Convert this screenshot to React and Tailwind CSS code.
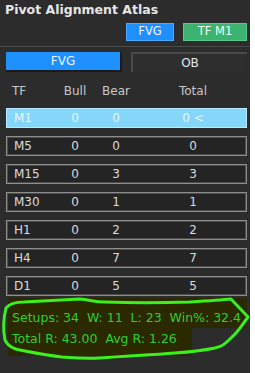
import React from "react";

const rows = [
  { tf: "M1", bull: "0", bear: "0", total: "0 <", active: true },
  { tf: "M5", bull: "0", bear: "0", total: "0" },
  { tf: "M15", bull: "0", bear: "3", total: "3" },
  { tf: "M30", bull: "0", bear: "1", total: "1" },
  { tf: "H1", bull: "0", bear: "2", total: "2" },
  { tf: "H4", bull: "0", bear: "7", total: "7" },
  { tf: "D1", bull: "0", bear: "5", total: "5" },
];

const font = { fontFamily: '"DejaVu Sans", Verdana, sans-serif' };

export default function App() {
  return (
    <div className="w-[255px] h-[373px] bg-white flex" style={font}>
      <div className="relative w-[250px] h-[373px] bg-[#2c2c2c] flex flex-col overflow-hidden">
        <div className="h-[20px] pl-[5px] leading-[20px] text-[12.5px] font-bold text-[#e6e6e6]">
          Pivot Alignment Atlas
        </div>
        <div className="mt-[3px] flex justify-end gap-[9px] pr-[3px]">
          <div className="w-[48px] h-[18px] bg-[#1e90ff] border border-[#4aa8ff] flex items-center justify-center text-[11.5px] text-[#f0f6ff]">
            FVG
          </div>
          <div className="w-[64px] h-[18px] bg-[#3cb371] border border-[#5cc98c] flex items-center justify-center text-[11.5px] text-[#f0fff4]">
            TF M1
          </div>
        </div>
        <div className="mt-[5px] h-[1px] bg-[#4a4a4a]" />
        <div className="mt-[5px] flex gap-[9px] px-[6px] pr-[3px]">
          <div className="w-[116px] h-[20px] bg-[#1e90ff] border-r-2 border-b-2 border-[#1a1a1a] flex items-center justify-center text-[12px] text-[#eaf4ff]">
            FVG
          </div>
          <div className="w-[116px] h-[20px] bg-[#2e2e2e] border-t-2 border-l-2 border-[#4a4a4a] flex items-center justify-center text-[12px] text-[#e8e8e8]">
            OB
          </div>
        </div>
        <div className="mt-[10px] mx-[6px] h-[16px] grid grid-cols-[50px_38px_44px_110px] items-center text-[12px] text-[#c8c8c8]">
          <div className="pl-[6px]">TF</div>
          <div className="text-center">Bull</div>
          <div className="text-center">Bear</div>
          <div className="text-center">Total</div>
        </div>
        <div className="mt-[10px] flex flex-col gap-[8px] pl-[6px] pr-[3px]">
          {rows.map((r) =>
            r.active ? (
              <div
                key={r.tf}
                className="h-[20px] grid grid-cols-[49px_38px_44px_110px] items-center border border-[#b8ecff] bg-[#84d6fa] text-[12px] text-[#e6f6ff]"
              >
                <div className="pl-[7px]">{r.tf}</div>
                <div className="text-center">{r.bull}</div>
                <div className="text-center">{r.bear}</div>
                <div className="text-center">{r.total}</div>
              </div>
            ) : (
              <div
                key={r.tf}
                className="h-[20px] grid grid-cols-[49px_38px_44px_110px] items-center border border-[#8e8e8e] shadow-[inset_0_0_0_1px_#4c4c4c] bg-[#242424] text-[12px] text-[#dcdcdc]"
              >
                <div className="pl-[7px]">{r.tf}</div>
                <div className="text-center">{r.bull}</div>
                <div className="text-center">{r.bear}</div>
                <div className="text-center">{r.total}</div>
              </div>
            )
          )}
        </div>
        <div className="mt-[2px] ml-[8px] flex flex-col items-start text-[12.5px] text-[#32cd32]">
          <div className="w-[239px] bg-[#2b2900] pt-[10px] pl-[4px] leading-[20px] whitespace-pre">
            {"Setups: 34  W: 11  L: 23  Win%: 32.4"}
          </div>
          <div className="w-[184px] bg-[#2b2900] pl-[4px] pb-[6px] leading-[22px] whitespace-pre">
            {"Total R: 43.00  Avg R: 1.26"}
          </div>
        </div>
        <svg
          className="absolute left-0 top-0 pointer-events-none"
          width="250"
          height="373"
          viewBox="0 0 250 373"
        >
          <path
            d="M6 308 C10 303 16 302 24 302 C40 301 60 300 80 299 C90 300 95 302 105 302 C130 303 160 303 190 302 C205 301 220 300 231 299 L248 317 C242 325 238 332 232 337 C226 343 222 347 215 348 C200 351 190 352 175 353 C150 355 125 356 100 358 C85 359 75 358 62 357 C45 355 35 353 25 351 C15 350 8 347 5 340 C3 330 3 320 6 308 Z"
            fill="none"
            stroke="#3cf01c"
            strokeWidth="3"
            strokeLinejoin="round"
            strokeLinecap="round"
          />
        </svg>
      </div>
    </div>
  );
}
